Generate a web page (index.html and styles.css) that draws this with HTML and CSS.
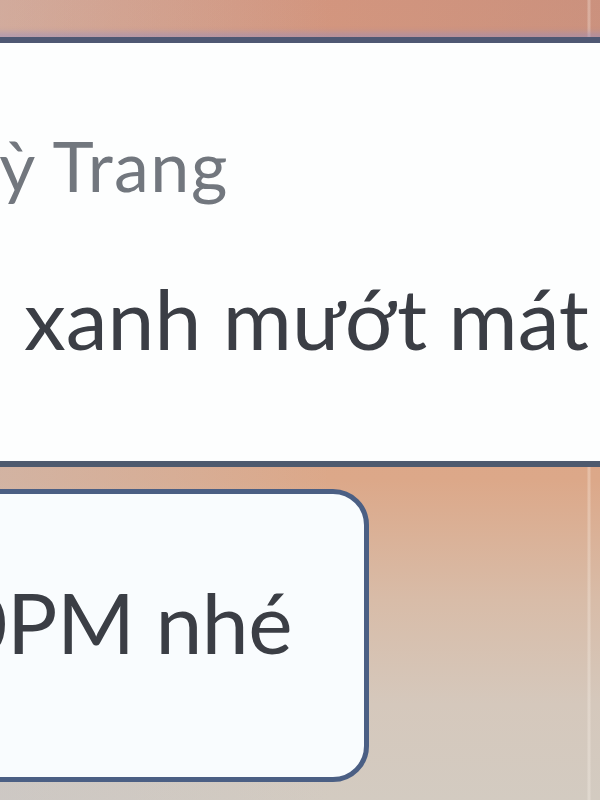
FILE: index.html
```html
<!DOCTYPE html>
<html lang="vi">
<head>
<meta charset="utf-8">
<title>Chat</title>
<link rel="stylesheet" href="styles.css">
</head>
<body>
<div class="page">
  <section class="card">
    <div class="name">Thuỳ Trang</div>
    <div class="msg">cỏ xanh mướt mát</div>
  </section>
  <div class="row">
    <div class="bubble">10PM nhé</div>
  </div>
</div>
</body>
</html>
```

FILE: styles.css
```css
html, body {
  margin: 0;
  padding: 0;
  width: 600px;
  height: 800px;
  overflow: hidden;
}
body {
  background:
    linear-gradient(90deg, transparent 587px, rgba(255, 248, 240, 0.28) 588px, rgba(255, 248, 240, 0.28) 590px, transparent 591px),
    linear-gradient(90deg, rgba(255, 255, 255, 0) 0%, rgba(140, 110, 120, 0.2) 100%) top / 100% 40px no-repeat,
    linear-gradient(90deg, rgba(196, 196, 200, 0.4) 0%, rgba(196, 196, 200, 0.2) 30%, rgba(196, 196, 200, 0) 55%),
    linear-gradient(180deg, #db9a7f 0%, #dca889 60%, #d8bca8 75%, #d5c8bc 88%, #d3cbc1 100%);
  font-family: "Lato", "Open Sans", sans-serif;
}
.page {
  filter: blur(0.7px);
  padding-top: 37px;
}
.card {
  margin-left: -260px;
  margin-right: -40px;
  height: 418px;
  background: #fdfefe;
  border-top: 6px solid #4f5873;
  border-bottom: 6px solid #4e5a6e;
  box-shadow: 0 -5px 5px rgba(150, 140, 190, 0.45);
}
.name {
  font-size: 70px;
  letter-spacing: 1.5px;
  line-height: 1;
  color: #72777e;
  padding-top: 87px;
  padding-left: 136px;
  white-space: nowrap;
}
.msg {
  font-size: 84px;
  line-height: 1;
  color: #3b3e45;
  padding-top: 76px;
  padding-right: 51px;
  text-align: right;
  white-space: nowrap;
}
.row {
  padding-top: 22px;
  display: flex;
}
.bubble {
  margin-left: -200px;
  width: 487px;
  height: 197px;
  box-sizing: content-box;
  background: #f9fcfe;
  border: 5px solid #4b5f84;
  border-radius: 36px;
  font-size: 84px;
  letter-spacing: -0.5px;
  line-height: 1;
  color: #3b3e45;
  padding-top: 86px;
  padding-right: 72px;
  text-align: right;
  white-space: nowrap;
}
```
